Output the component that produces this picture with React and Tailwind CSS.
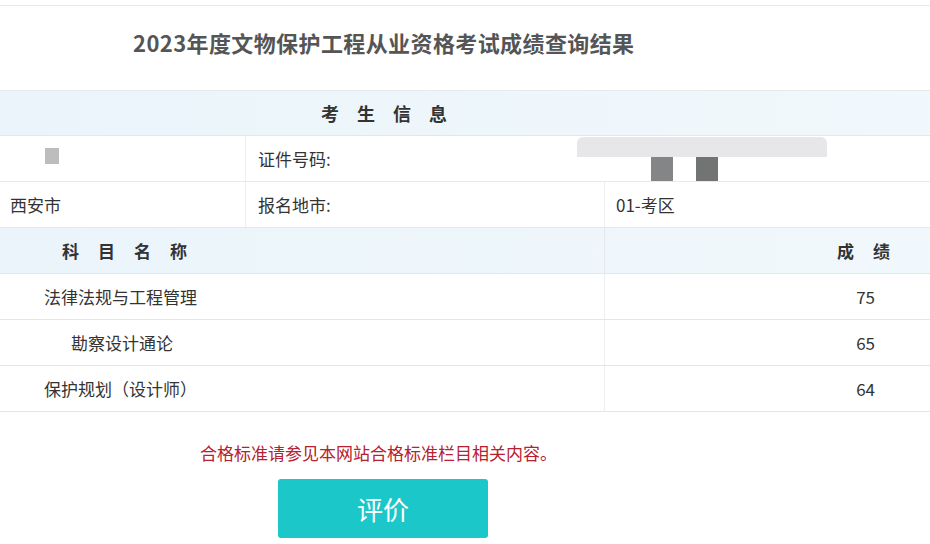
import React from 'react';

const font = { fontFamily: '"Noto Sans CJK SC", "Liberation Sans", sans-serif' };

const subjects = [
  { name: '法律法规与工程管理', score: 75, indent: 'pl-[44px]' },
  { name: '勘察设计通论', score: 65, indent: 'pl-[71px]' },
  { name: '保护规划（设计师）', score: 64, indent: 'pl-[44px]' },
];

export default function App() {
  return (
    <div className="w-[930px] h-[544px] bg-white overflow-hidden text-[#333]" style={font}>
      <div className="h-[5px]" />
      {/* 标题 */}
      <div className="h-[86px] border-y border-[#e6e8ea] flex items-center pl-[133px] pb-[12px]">
        <h1 className="text-[22px] font-bold text-[#555] tracking-[0.4px]">2023年度文物保护工程从业资格考试成绩查询结果</h1>
      </div>

      {/* 考生信息 */}
      <div className="h-[45px] bg-gradient-to-r from-[#eaf4fa] to-[#f1f8fc] border-b border-[#e3e8eb] flex items-center pl-[321px]">
        <span className="text-[18px] font-bold tracking-[18px] text-[#333]">考生信息</span>
      </div>

      <div className="grid grid-cols-[246px_359px_1fr] h-[46px] border-b border-[#e6e9eb] text-[17px]">
        <div className="relative border-r border-[#eceeef]">
          <div className="absolute left-[45px] top-[12px] w-[14px] h-[16px] bg-[#bdbdbd]" />
        </div>
        <div className="flex items-center pl-[12px]">证件号码:</div>
        <div className="relative">
          <div className="absolute -left-[28px] top-[1px] w-[250px] h-[20px] rounded-t-[6px] bg-[#e7e7ea]" />
          <div className="absolute left-[46px] top-[21px] w-[22px] h-[24px] bg-[#838586]" />
          <div className="absolute left-[91px] top-[21px] w-[22px] h-[24px] bg-[#727473]" />
        </div>
      </div>

      <div className="grid grid-cols-[246px_359px_1fr] h-[46px] border-b border-[#e3e8eb] text-[17px]">
        <div className="flex items-center pl-[10px] border-r border-[#eceeef]">西安市</div>
        <div className="flex items-center pl-[12px] border-r border-[#eceeef]">报名地市:</div>
        <div className="flex items-center pl-[11px]">01-考区</div>
      </div>

      {/* 科目 */}
      <div className="grid grid-cols-[605px_1fr] h-[46px] bg-gradient-to-r from-[#eaf4fa] to-[#f1f8fc] border-b border-[#e3e8eb]">
        <div className="flex items-center pl-[62px] border-r border-[#e3e8eb]">
          <span className="text-[17px] font-bold tracking-[19px]">科目名称</span>
        </div>
        <div className="flex items-center justify-end pr-[40px]">
          <span className="text-[17px] font-bold tracking-[19px] -mr-[19px]">成绩</span>
        </div>
      </div>

      {subjects.map((s) => (
        <div key={s.name} className="grid grid-cols-[605px_1fr] h-[46px] border-b border-[#e3e6e8] text-[17px]">
          <div className={`flex items-center ${s.indent} border-r border-[#eceeef]`}>{s.name}</div>
          <div className="flex items-center justify-end pr-[55px]">{s.score}</div>
        </div>
      ))}

      {/* 提示 */}
      <div className="pt-[28px] pl-[200px] text-[17px] text-[#b7202e]">合格标准请参见本网站合格标准栏目相关内容。</div>

      <div className="pt-[13px] pl-[278px]">
        <button className="w-[210px] h-[59px] rounded-[3px] bg-[#1cc7c9] text-white text-[26px] flex items-center justify-center">
          评价
        </button>
      </div>
    </div>
  );
}
